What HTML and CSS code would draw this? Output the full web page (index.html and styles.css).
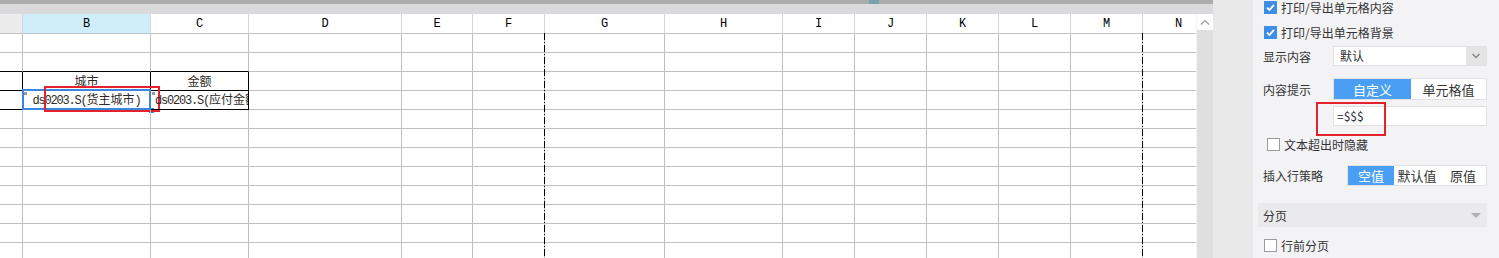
FILE: index.html
```html
<!DOCTYPE html>
<html lang="zh">
<head>
  <meta charset="UTF-8">
  <meta name="viewport" content="width=device-width, initial-scale=1.0">
  <title>单元格属性</title>
  <link rel="stylesheet" href="styles.css">
</head>
<body>
  <div class="app">
    <div class="sheet">
      <div class="hscroll"><div class="thumb"></div></div>
      <div class="tabs"></div>
      <div class="main">
        <div class="grid-wrap">
          <div class="grid" id="grid"></div>
          <div class="page-break pb-1"></div>
          <div class="page-break pb-2"></div>
        </div>
        <div class="vscroll">
          <div class="vs-btn">
            <svg width="10" height="6" viewBox="0 0 10 6"><path d="M1 5.5 L5 1.5 L9 5.5" fill="none" stroke="#9a9a9a" stroke-width="1.2"/></svg>
          </div>
        </div>
      </div>
    </div>

    <div class="side">
      <div class="props">
        <div class="row r1">
          <span class="cb on"><svg width="11" height="11" viewBox="0 0 11 11"><path d="M2 5.6 L4.4 8 L9 2.8" fill="none" stroke="#fff" stroke-width="1.8"/></svg></span>
          <span>打印/导出单元格内容</span>
        </div>
        <div class="row r2">
          <span class="cb on"><svg width="11" height="11" viewBox="0 0 11 11"><path d="M2 5.6 L4.4 8 L9 2.8" fill="none" stroke="#fff" stroke-width="1.8"/></svg></span>
          <span>打印/导出单元格背景</span>
        </div>
        <div class="row r3">
          <span class="label">显示内容</span>
          <div class="select">
            <span class="select-text">默认</span>
            <span class="select-btn"><svg width="10" height="6" viewBox="0 0 10 6"><path d="M1.5 1 L5 4.5 L8.5 1" fill="none" stroke="#777" stroke-width="1.1"/></svg></span>
          </div>
        </div>
        <div class="row r4">
          <span class="label">内容提示</span>
          <div class="seg seg-2">
            <span class="seg-item active">自定义</span>
            <span class="seg-item">单元格值</span>
          </div>
        </div>
        <div class="row r5">
          <div class="input">=$$$</div>
          <div class="mark-box"></div>
        </div>
        <div class="row r6">
          <span class="cb"></span>
          <span>文本超出时隐藏</span>
        </div>
        <div class="row r7">
          <span class="label wide">插入行策略</span>
          <div class="seg seg-3">
            <span class="seg-item active">空值</span>
            <span class="seg-item">默认值</span>
            <span class="seg-item">原值</span>
          </div>
        </div>
        <div class="row r8 section">
          <span>分页</span>
          <span class="tri"></span>
        </div>
        <div class="row r9">
          <span class="cb"></span>
          <span>行前分页</span>
        </div>
      </div>
    </div>
  </div>

  <script>
    const grid = document.getElementById('grid');
    const cols = ['', 'B', 'C', 'D', 'E', 'F', 'G', 'H', 'I', 'J', 'K', 'L', 'M', 'N'];
    const rowCount = 12;

    cols.forEach((name, i) => {
      const cell = document.createElement('div');
      cell.className = 'hcell';
      if (i === 0) cell.classList.add('corner');
      if (name === 'B') cell.classList.add('active');
      cell.textContent = name;
      grid.appendChild(cell);
    });

    for (let r = 0; r < rowCount; r++) {
      for (let c = 0; c < cols.length; c++) {
        const cell = document.createElement('div');
        cell.className = 'cell';

        if (r === 1 && c <= 2) cell.classList.add('edge-b');
        if ((r === 2 || r === 3) && c <= 2) cell.classList.add('edge-b', 'edge-r');

        if (r === 2 && c === 1) cell.innerHTML = '<span class="txt center">城市</span>';
        if (r === 2 && c === 2) cell.innerHTML = '<span class="txt center">金额</span>';

        if (r === 3 && c === 1) {
          cell.innerHTML =
            '<span class="tick"></span>' +
            '<span class="txt center"><span class="mono">ds0203.S(</span>货主城市<span class="mono">)</span></span>' +
            '<span class="sel"><span class="handle"></span></span>' +
            '<span class="red-box"></span>';
        }
        if (r === 3 && c === 2) {
          // overflowing text is clipped by the cell, as in the sheet
          cell.innerHTML =
            '<span class="tick"></span>' +
            '<span class="txt left"><span class="mono">ds0203.S(</span>应付金额<span class="mono">)</span></span>';
        }
        grid.appendChild(cell);
      }
    }
  </script>
</body>
</html>
```

FILE: styles.css
```css
body {
  margin: 0;
  width: 1499px;
  height: 258px;
  overflow: hidden;
  font-family: "Noto Sans CJK SC", sans-serif;
  background-color: #fff;
}

.app {
  display: flex;
  height: 258px;
}

/* sheet area */

.sheet {
  width: 1213px;
  display: flex;
  flex-direction: column;
}

.hscroll {
  height: 4px;
  background-color: #acacac;
  display: flex;
}

.thumb {
  margin-left: 869px;
  width: 10px;
  background-color: #73a3ae;
}

.tabs {
  height: 10px;
  background-color: #dadadd;
}

.main {
  flex: 1;
  display: flex;
  overflow: hidden;
}

.grid-wrap {
  width: 1196px;
  overflow: hidden;
  position: relative;
}

.grid {
  display: grid;
  grid-template-columns: 23px 128px 98px 153px 71px 72px 120px 118px 72px 72px 72px 72px 72px 72px;
  grid-template-rows: 20px;
  grid-auto-rows: 19px;
  width: 1215px;
}

.hcell {
  box-sizing: border-box;
  border-right: 1px solid #d6d6d6;
  border-bottom: 1px solid #c2c2c2;
  background-color: #fff;
  font-family: "Liberation Mono", monospace;
  font-size: 12px;
  color: #000;
  display: flex;
  align-items: center;
  justify-content: center;
  padding-top: 1px;
}

.hcell.corner {
  background-color: #ececec;
}

.hcell.active {
  background-color: #cfeef9;
}

.cell {
  box-sizing: border-box;
  border-right: 1px solid #c0c0c0;
  border-bottom: 1px solid #c0c0c0;
  position: relative;
  display: flex;
  align-items: center;
  font-size: 12px;
  color: #2e2a28;
  white-space: nowrap;
}

.cell.edge-b {
  border-bottom-color: #000;
}

.cell.edge-r {
  border-right-color: #000;
}

.txt {
  flex: 1;
  overflow: hidden;
  line-height: 18px;
}

.txt.center {
  text-align: center;
}

.txt.left {
  padding-left: 4px;
}

.mono {
  font-family: "Liberation Mono", monospace;
  font-size: 12px;
  letter-spacing: -1.2px;
}

.tick {
  position: absolute;
  top: 1px;
  left: 1px;
  width: 3px;
  height: 3px;
  background-color: #9a9a9a;
}

.sel {
  position: absolute;
  top: -2px;
  left: -1px;
  right: -1px;
  bottom: -1px;
  border: 2px solid #3a87e3;
}

.handle {
  position: absolute;
  right: -5px;
  bottom: -5px;
  width: 5px;
  height: 5px;
  background-color: #3a87e3;
}

.red-box {
  position: absolute;
  left: 21px;
  top: -5px;
  width: 116px;
  height: 26px;
  box-sizing: border-box;
  border: 2px solid #e3222b;
}

.page-break {
  position: absolute;
  top: 19px;
  bottom: 0;
  width: 1px;
  background: repeating-linear-gradient(to bottom, #000 0 7px, transparent 7px 9px, #000 9px 10px, transparent 10px 12px);
}

.pb-1 {
  left: 544px;
}

.pb-2 {
  left: 1142px;
}

.vscroll {
  width: 16px;
  background-color: #dfdfdf;
  border-left: 1px solid #f4f4f4;
}

.vs-btn {
  height: 16px;
  background-color: #fff;
  display: flex;
  align-items: center;
  justify-content: center;
}

/* property panel */

.side {
  flex: 1;
  display: flex;
  background-color: #e9e9e9;
  padding-left: 40px;
}

.props {
  flex: 1;
  background-color: #f3f3f5;
  padding: 0 12px 0 10px;
  display: flex;
  flex-direction: column;
  font-size: 12px;
  color: #333;
}

.row {
  display: flex;
  align-items: center;
  position: relative;
}

.r1 { height: 14px; }
.r2 { height: 14px; margin-top: 11px; }
.r3 { height: 20px; margin-top: 7px; }
.r4 { height: 22px; margin-top: 12px; }
.r5 { height: 20px; margin-top: 6px; }
.r6 { height: 14px; margin-top: 11px; }
.r7 { height: 21px; margin-top: 14px; }
.r8 { height: 24px; margin-top: 17px; }
.r9 { height: 14px; margin-top: 11px; }

.cb {
  width: 13px;
  height: 13px;
  box-sizing: border-box;
  margin: 0 4px 0 1px;
  border: 1px solid #9b9b9b;
  background-color: #fff;
  display: flex;
  align-items: center;
  justify-content: center;
}

.cb.on {
  border-color: #3d8ee8;
  background-color: #3d8ee8;
}

.r6 .cb {
  margin-left: 4px;
}

.label {
  width: 70px;
}

.label.wide {
  width: 84px;
}

.select {
  flex: 1;
  height: 20px;
  display: flex;
  background-color: #fff;
  box-sizing: border-box;
  border: 1px solid #e2e2e2;
}

.select-text {
  flex: 1;
  padding-left: 6px;
  line-height: 18px;
}

.select-btn {
  width: 20px;
  background-color: #e4e4e4;
  display: flex;
  align-items: center;
  justify-content: center;
}

.seg {
  flex: 1;
  height: 100%;
  display: flex;
  background-color: #fff;
  box-sizing: border-box;
  border: 1px solid #e2e2e2;
}

.seg-item {
  flex: 1;
  display: flex;
  align-items: center;
  justify-content: center;
  font-size: 13px;
  color: #333;
}

.seg-item.active {
  background-color: #4a9ff5;
  color: #fff;
}

.seg-2 .seg-item.active {
  flex: 0 0 77px;
}

.r5 .input {
  margin-left: 70px;
  flex: 1;
  height: 20px;
  box-sizing: border-box;
  border: 1px solid #e0e0e0;
  background-color: #fff;
  padding-left: 3px;
  line-height: 18px;
  font-size: 12px;
  color: #2a2a3a;
}

.mark-box {
  position: absolute;
  left: 53px;
  top: -4px;
  width: 70px;
  height: 34px;
  box-sizing: border-box;
  border: 2px solid #e3222b;
}

.section {
  margin-left: -5px;
  padding-left: 5px;
  padding-right: 6px;
  background-color: #eaeaec;
  justify-content: space-between;
}

.tri {
  width: 0;
  height: 0;
  border-left: 5px solid transparent;
  border-right: 5px solid transparent;
  border-top: 5px solid #b0b0b0;
}
```
